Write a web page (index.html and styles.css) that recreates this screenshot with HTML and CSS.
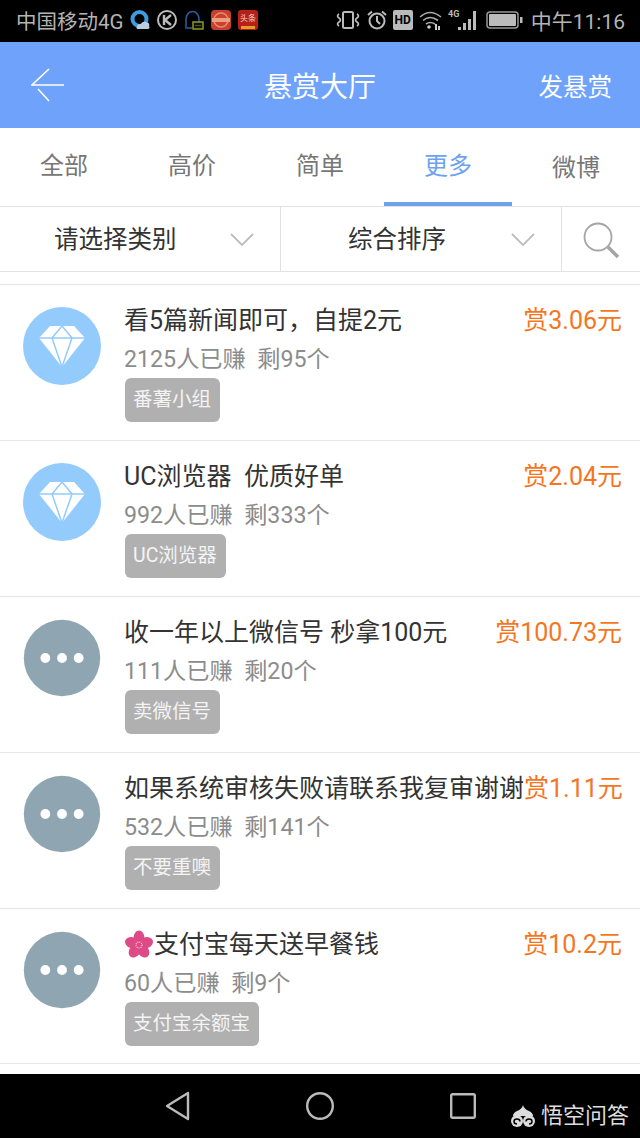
FILE: index.html
```html
<!DOCTYPE html>
<html lang="zh-CN">
<head>
    <meta charset="UTF-8" />
    <title>悬赏大厅</title>
    <link rel="stylesheet" href="styles.css">
</head>
<body>
<div id="screen">
    <div class="status-bar">
        <span class="carrier">中国移动4G</span>
        <svg class="st-icon" width="20" height="20" viewBox="0 0 20 20"><circle cx="9.500" cy="9" r="7" fill="none" stroke="#3f9be0" stroke-width="4"/><path d="M7 19 a4 3.500 0 0 1 4-5 a4 3 0 0 1 8 2 a2 2 0 0 1-1 3z" fill="#bcd"/></svg>
        <svg class="st-icon" width="20" height="20" viewBox="0 0 20 20"><circle cx="10" cy="10" r="9" fill="none" stroke="#bbb" stroke-width="2"/><path d="M7 5v10M14 5l-6 5 6 5" fill="none" stroke="#bbb" stroke-width="2.400"/></svg>
        <svg class="st-icon" width="20" height="21" viewBox="0 0 20 21"><path d="M2 17v-8a6.500 7.500 0 0 1 13 0v3" fill="none" stroke="#2a5fa8" stroke-width="1.500"/><path d="M1 18h7" stroke="#2a5fa8" stroke-width="1.500"/><rect x="9" y="12" width="10" height="7" fill="#111" stroke="#8a9a20" stroke-width="1.500"/><path d="M11.500 15.500h5" stroke="#8a9a20" stroke-dasharray="1 1"/></svg>
        <svg class="st-icon" width="20" height="20" viewBox="0 0 20 20"><rect width="20" height="20" rx="4" fill="#c9402e"/><circle cx="10" cy="10" r="7" fill="none" stroke="#e98a70" stroke-width="1.500"/><rect x="1" y="8" width="18" height="4" fill="#e9a080"/></svg>
        <svg class="st-icon" width="20" height="20" viewBox="0 0 20 20"><rect width="20" height="20" rx="3" fill="#b81f1a"/><text x="2" y="11" class="toutiao">头条</text><rect x="3" y="16" width="14" height="3" fill="#e0a020"/></svg>
        <span class="status-right">
            <svg width="26" height="20" viewBox="0 0 26 20"><rect x="8" y="2" width="10" height="16" rx="1.500" fill="none" stroke="#bbb" stroke-width="2"/><path d="M4 4q-3 2 0 4t0 4q-3 2 0 4M22 4q3 2 0 4t0 4q3 2 0 4" fill="none" stroke="#bbb" stroke-width="1.600"/></svg>
            <svg width="20" height="20" viewBox="0 0 20 20"><circle cx="10" cy="11" r="7.500" fill="none" stroke="#bbb" stroke-width="2"/><path d="M10 6v5l3 3M1 5l4-3.500M19 5l-4-3.500" fill="none" stroke="#bbb" stroke-width="2"/></svg>
            <span class="hd">HD</span>
            <svg width="23" height="20" viewBox="0 0 23 20"><path d="M1 7q10-9 21 0M4 10.500q7-6 15 0M7 14q4-3 9 0" fill="none" stroke="#aaa" stroke-width="1.600"/><circle cx="10" cy="17" r="1.800" fill="#ccc"/><path d="M16 14h2v6h-2zM19 16h2v4h-2z" fill="#ccc"/></svg>
            <svg width="32" height="22" viewBox="0 0 32 22"><text x="0" y="8" class="sig-text">4G</text><path d="M10 18h3v3h-3zM15 14h3v7h-3zM20 10h3v11h-3zM25 2h3v19h-3z" fill="#bbb"/></svg>
            <svg width="37" height="18" viewBox="0 0 37 18"><rect x="1" y="1" width="31" height="16" rx="3" fill="none" stroke="#999" stroke-width="1.500"/><rect x="3" y="3" width="27" height="12" rx="1" fill="#bbb"/><rect x="34" y="6" width="2.500" height="6" fill="#bbb"/></svg>
            <span class="clock">中午11:16</span>
        </span>
    </div>

    <header class="app-header">
        <div class="header-side">
            <svg width="34" height="34" viewBox="0 0 34 34"><path d="M18 1L1 17H33M7 21L18 33" fill="none" stroke="#fff" stroke-width="1.600"/></svg>
        </div>
        <h1>悬赏大厅</h1>
        <div class="header-side right">
            <a class="publish" href="#">发悬赏</a>
        </div>
    </header>

    <nav class="tabs">
        <a href="#">全部</a>
        <a href="#">高价</a>
        <a href="#">简单</a>
        <a href="#" class="active">更多</a>
        <a href="#" class="low">微博</a>
    </nav>

    <div class="filters">
        <div class="filter filter-type">
            <span>请选择类别</span>
            <svg width="24" height="14" viewBox="0 0 24 14"><path d="M1 1l11 11L23 1" fill="none" stroke="#bdbdbd" stroke-width="1.800"/></svg>
        </div>
        <div class="filter filter-sort">
            <span>综合排序</span>
            <svg width="24" height="14" viewBox="0 0 24 14"><path d="M1 1l11 11L23 1" fill="none" stroke="#bdbdbd" stroke-width="1.800"/></svg>
        </div>
        <div class="filter-search">
            <svg width="38" height="38" viewBox="0 0 38 38"><circle cx="16" cy="16" r="13.500" fill="none" stroke="#a5a5a5" stroke-width="1.800"/><path d="M26 26l10 10" stroke="#a5a5a5" stroke-width="3.500"/></svg>
        </div>
    </div>

    <div class="list">
        <div class="item">
            <div class="avatar blue">
                <svg width="48" height="44" viewBox="0 0 48 44"><path class="gem" d="M12 2H36L47 14L24 43L1 14Z"/><path class="gem-cut" d="M1 14H47M24 2L14 14L24 43L34 14L24 2"/></svg>
            </div>
            <div class="item-body">
                <div class="item-top"><span class="item-title">看5篇新闻即可，自提2元</span><span class="price">赏3.06元</span></div>
                <div class="item-sub">2125人已赚&nbsp;&nbsp;剩95个</div>
                <span class="tag">番薯小组</span>
            </div>
        </div>
        <div class="item">
            <div class="avatar blue">
                <svg width="48" height="44" viewBox="0 0 48 44"><path class="gem" d="M12 2H36L47 14L24 43L1 14Z"/><path class="gem-cut" d="M1 14H47M24 2L14 14L24 43L34 14L24 2"/></svg>
            </div>
            <div class="item-body">
                <div class="item-top"><span class="item-title">UC浏览器&nbsp;&nbsp;优质好单</span><span class="price">赏2.04元</span></div>
                <div class="item-sub">992人已赚&nbsp;&nbsp;剩333个</div>
                <span class="tag">UC浏览器</span>
            </div>
        </div>
        <div class="item">
            <div class="avatar gray"><i></i><i></i><i></i></div>
            <div class="item-body">
                <div class="item-top"><span class="item-title">收一年以上微信号 秒拿100元</span><span class="price">赏100.73元</span></div>
                <div class="item-sub">111人已赚&nbsp;&nbsp;剩20个</div>
                <span class="tag">卖微信号</span>
            </div>
        </div>
        <div class="item">
            <div class="avatar gray"><i></i><i></i><i></i></div>
            <div class="item-body">
                <div class="item-top"><span class="item-title">如果系统审核失败请联系我复审谢谢</span><span class="price">赏1.11元</span></div>
                <div class="item-sub">532人已赚&nbsp;&nbsp;剩141个</div>
                <span class="tag">不要重噢</span>
            </div>
        </div>
        <div class="item">
            <div class="avatar gray"><i></i><i></i><i></i></div>
            <div class="item-body">
                <div class="item-top">
                    <span class="item-title">
                        <svg class="flower" width="30" height="30" viewBox="0 0 30 30"><g fill="#dd4a86"><ellipse cx="15" cy="8" rx="5.500" ry="7.500"/><ellipse cx="15" cy="8" rx="5.500" ry="7.500" transform="rotate(72 15 15)"/><ellipse cx="15" cy="8" rx="5.500" ry="7.500" transform="rotate(144 15 15)"/><ellipse cx="15" cy="8" rx="5.500" ry="7.500" transform="rotate(216 15 15)"/><ellipse cx="15" cy="8" rx="5.500" ry="7.500" transform="rotate(288 15 15)"/></g><circle cx="15" cy="15" r="3" fill="none" stroke="#f8d8e4" stroke-width="1.200" stroke-dasharray="1 1"/></svg>支付宝每天送早餐钱</span>
                    <span class="price">赏10.2元</span>
                </div>
                <div class="item-sub">60人已赚&nbsp;&nbsp;剩9个</div>
                <span class="tag">支付宝余额宝</span>
            </div>
        </div>
    </div>

    <div class="nav-bar">
        <svg width="25" height="30" viewBox="0 0 25 30"><path d="M23 2v26L2 15z" fill="none" stroke="#bbb" stroke-width="2.400" stroke-linejoin="round"/></svg>
        <svg width="28" height="28" viewBox="0 0 28 28"><circle cx="14" cy="14" r="12.800" fill="none" stroke="#bbb" stroke-width="2.400"/></svg>
        <svg width="26" height="26" viewBox="0 0 26 26"><rect x="1.200" y="1.200" width="23.600" height="23.600" rx="1.500" fill="none" stroke="#bbb" stroke-width="2.400"/></svg>
    </div>

    <div class="watermark">
        <svg width="26" height="23" viewBox="0 0 26 23"><path d="M13 0Q14 4 19 6Q23 8 23 11H3Q3 8 7 6Q12 4 13 0Z" fill="#ddd"/><circle cx="7" cy="16" r="6" fill="#ddd"/><circle cx="19" cy="16" r="6" fill="#ddd"/><path d="M10 16.500a3 2.500 0 1 0-3 2.500M16 16.500a3 2.500 0 1 1 3 2.500" fill="none" stroke="#000" stroke-width="1.500"/></svg>
        <span>悟空问答</span>
    </div>
</div>
</body>
</html>
```

FILE: styles.css
```css
* {
    box-sizing: border-box;
}
body {
    margin: 0;
    font-family: Roboto, "Noto Sans CJK SC", sans-serif;
    background-color: #fff;
}
#screen {
    position: relative;
    width: 640px;
    height: 1138px;
    overflow: hidden;
    display: flex;
    flex-direction: column;
}

/* barra de status */
.status-bar {
    height: 42px;
    background-color: #000;
    color: #b4b4b4;
    display: flex;
    align-items: center;
    padding: 0 15px 2px 16px;
    font-size: 20.500px;
}
.carrier {
    margin-right: 6px;
}
.st-icon {
    margin-right: 7px;
}
.status-right {
    margin-left: auto;
    display: flex;
    align-items: center;
    gap: 6px;
}
.hd {
    width: 20px;
    height: 20px;
    background-color: #bbb;
    color: #000;
    border-radius: 2px;
    font-size: 12px;
    font-weight: bold;
    line-height: 20px;
    text-align: center;
}
.sig-text {
    font-size: 9px;
    font-weight: bold;
    fill: #bbb;
}
.toutiao {
    font-size: 8px;
    fill: #f3d8c0;
}
.clock {
    margin-left: 2px;
    font-size: 21px;
}

/* topo azul */
.app-header {
    height: 86px;
    background-color: #6ea2fb;
    color: #fff;
    display: flex;
    align-items: center;
    padding: 0 28px 0 31px;
}
.header-side {
    flex: 1;
    display: flex;
    align-items: center;
}
.header-side.right {
    justify-content: flex-end;
}
.app-header h1 {
    margin: 0;
    padding: 0 3px 0 0;
    font-size: 28px;
    font-weight: normal;
}
.publish {
    color: #fff;
    font-size: 24.500px;
    text-decoration: none;
}

.tabs {
    height: 79px;
    display: flex;
    border-bottom: 1px solid #e2e2e2;
}
.tabs a {
    width: 128px;
    height: 78px;
    padding-top: 20px;
    text-align: center;
    font-size: 24px;
    line-height: 36px;
    color: #777;
    text-decoration: none;
}
.tabs a.active {
    color: #6ea2f0;
    border-bottom: 4px solid #6ea2f0;
}
.tabs a.low {
    padding-top: 22px;
}

.filters {
    height: 65px;
    display: flex;
    border-bottom: 1px solid #e2e2e2;
    font-size: 24.500px;
    color: #333;
}
.filter {
    display: flex;
    align-items: center;
    justify-content: space-between;
    border-right: 1px solid #e2e2e2;
}
.filter span {
    padding-bottom: 3px;
}
.filter svg {
    margin-top: 2px;
}
.filter-type {
    width: 281px;
    padding: 0 26px 0 54px;
}
.filter-sort {
    width: 281px;
    padding: 0 26px 0 67px;
}
.filter-search {
    flex: 1;
    display: flex;
    align-items: center;
    justify-content: center;
    padding-top: 2px;
}

.list {
    flex: 1;
    margin-top: 12px;
}
.item {
    height: 156px;
    display: flex;
    border-top: 1px solid #e6e6e6;
    padding: 0 18px 0 23px;
}
.item:last-child {
    height: 156px;
    border-bottom: 1px solid #e6e6e6;
}
.avatar {
    width: 78px;
    height: 78px;
    margin-top: 22px;
    margin-right: 24px;
    border-radius: 50%;
    display: flex;
    align-items: center;
    justify-content: center;
    flex-shrink: 0;
}
.avatar.blue {
    background-color: #93cbfd;
}
.avatar.gray {
    background-color: #8fa6b2;
    gap: 7px;
    transform: scale(0.98);
}
.avatar i {
    width: 10px;
    height: 10px;
    border-radius: 50%;
    background-color: #fff;
}
.gem {
    fill: #fff;
}
.gem-cut {
    fill: none;
    stroke: #93cbfd;
    stroke-width: 1.500;
}
.item-body {
    flex: 1;
    padding-top: 22px;
}
.item-top {
    display: flex;
    justify-content: space-between;
    height: 28px;
    margin-left: -1px;
    line-height: 28px;
    font-size: 25px;
    white-space: nowrap;
}
.item-title {
    color: #333;
    display: flex;
    align-items: center;
}
.flower {
    flex-shrink: 0;
}
.price {
    color: #f5761f;
}
.item-sub {
    margin-top: 10px;
    margin-left: -1px;
    height: 28px;
    line-height: 28px;
    font-size: 23.200px;
    color: #8c8c8c;
}
.tag {
    display: inline-block;
    margin-top: 5px;
    height: 44px;
    line-height: 44px;
    padding: 0 9px 0 8px;
    background-color: #b0b0b0;
    color: #f4f4f4;
    border-radius: 6px;
    font-size: 19.500px;
}

.nav-bar {
    height: 64px;
    background-color: #000;
    display: flex;
    align-items: center;
    padding-left: 165px;
    gap: 116px;
}
.watermark {
    position: absolute;
    right: 11px;
    bottom: 8px;
    display: flex;
    align-items: center;
    gap: 5px;
    color: #ddd;
    font-size: 22px;
    line-height: 28px;
}
```
